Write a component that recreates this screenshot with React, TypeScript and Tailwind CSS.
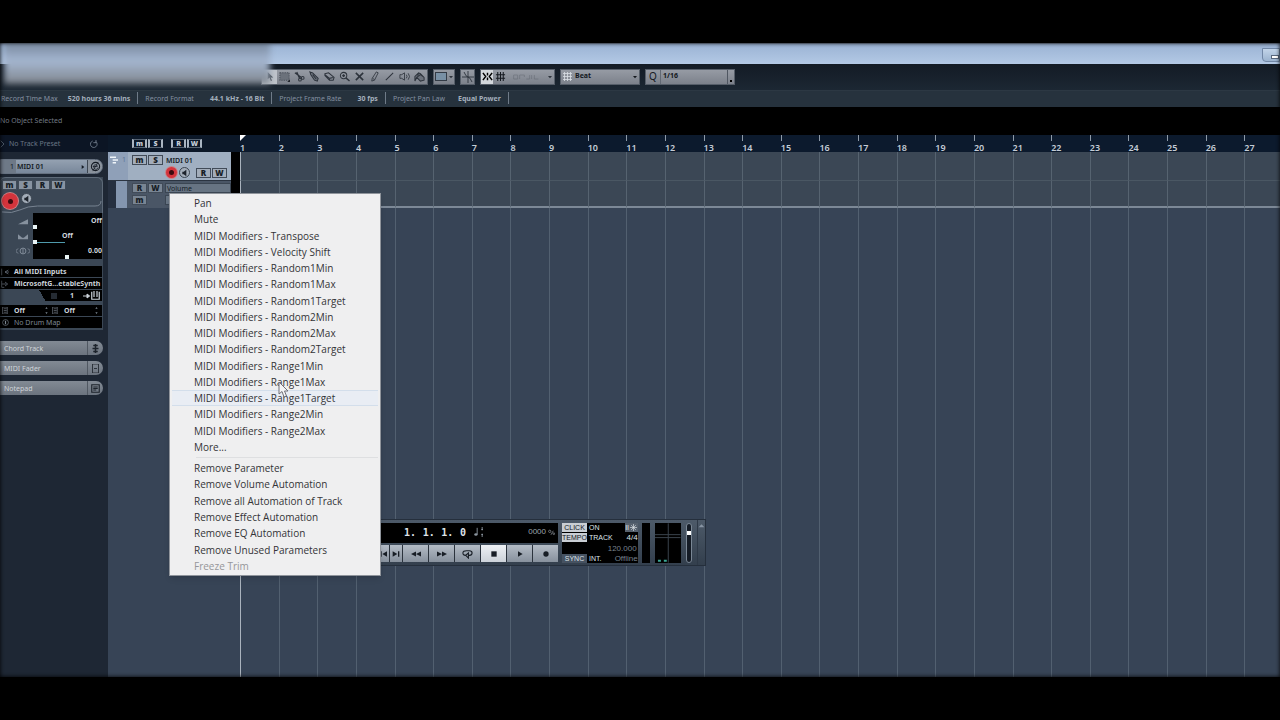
import type { ReactNode } from "react";

const bars = Array.from({ length: 27 }, (_, i) => i + 1);

const parameters = [
  "Pan",
  "Mute",
  "MIDI Modifiers - Transpose",
  "MIDI Modifiers - Velocity Shift",
  "MIDI Modifiers - Random1Min",
  "MIDI Modifiers - Random1Max",
  "MIDI Modifiers - Random1Target",
  "MIDI Modifiers - Random2Min",
  "MIDI Modifiers - Random2Max",
  "MIDI Modifiers - Random2Target",
  "MIDI Modifiers - Range1Min",
  "MIDI Modifiers - Range1Max",
  "MIDI Modifiers - Range1Target",
  "MIDI Modifiers - Range2Min",
  "MIDI Modifiers - Range2Max",
  "More...",
];

const removals = [
  "Remove Parameter",
  "Remove Volume Automation",
  "Remove all Automation of Track",
  "Remove Effect Automation",
  "Remove EQ Automation",
  "Remove Unused Parameters",
  "Freeze Trim",
];

function Icon({ children, className = "size-3" }: { children: ReactNode; className?: string }) {
  return (
    <svg viewBox="0 0 12 12" className={`shrink-0 ${className}`} fill="none" stroke="currentColor" strokeWidth="1.1" aria-hidden="true">
      {children}
    </svg>
  );
}

const tools: { name: string; icon: ReactNode }[] = [
  { name: "Object selection", icon: <path d="M4 1v8l2-2 1.5 4 1.2-.6L7.200 7H10z" fill="#39404a" stroke="none" /> },
  { name: "Range", icon: <><rect x="1" y="2" width="10" height="8" fill="#6b717b" stroke="#4a505a" strokeDasharray="1.500 1" /><path d="M12 9v3H9z" fill="#22262d" stroke="none" /></> },
  { name: "Split", icon: <><path d="M1 2l7 5M3 1l3 7" strokeWidth="1.400" /><circle cx="9.500" cy="7.500" r="1.500" /><circle cx="6.500" cy="9.500" r="1.500" /></> },
  { name: "Glue", icon: <path d="M1 1l3 1 6 6-1 3-3-1-4-6zM4 4l4 5" fill="#6b717b" /> },
  { name: "Erase", icon: <path d="M1 3l4-1 6 5-1 3H6L1 5zM1 4l5 4 4-1M6 8v2" /> },
  { name: "Zoom", icon: <><circle cx="5" cy="5" r="3.500" /><path d="M3.500 5h3M5 3.500v3M7.500 7.500l4 3.500" strokeWidth="1.500" /></> },
  { name: "Mute", icon: <path d="M2 2l8 8M10 2l-8 8" strokeWidth="1.700" /> },
  { name: "Draw", icon: <path d="M8 1l2 1-4 8-3 1 .5-3zM4 8l2 1.500" strokeWidth=".9" /> },
  { name: "Line", icon: <path d="M2 10l8-8" /> },
  { name: "Play", icon: <path d="M1 4h2l3-2v8L3 8H1zM8 4q1.500 2 0 4M10 2.500q3 3.500 0 7" strokeWidth=".9" /> },
  { name: "Colour", icon: <path d="M1 11V6l4-4 2 1 4 4v3l-4 1-4-4zM5 2l-1 3M3 7l4-3 4 3" fill="#6b717b" /> },
];

function MiniButton({ label, className = "bg-[#a3adba]", children }: { label: string; className?: string; children: ReactNode }) {
  return (
    <button aria-label={label} className={`flex h-[10px] w-[15px] items-center justify-center border border-[#414b58] font-sans text-[8px] leading-none font-black text-[#171d26] ${className}`}>
      {children}
    </button>
  );
}

function RecordButton({ className }: { className: string }) {
  return (
    <button aria-label="Record enable" className={`flex shrink-0 items-center justify-center rounded-full bg-[#d3343c] ring-1 ring-[#c98286] ${className}`}>
      <span className="size-[5px] rounded-full bg-[#3b0a0e]" />
    </button>
  );
}

function MonitorButton() {
  return (
    <button aria-label="Monitor" className="flex size-[11px] shrink-0 items-center justify-center rounded-full border border-[#3c4652] bg-[#a3adb9] text-[#1c222b]">
      <Icon className="size-2"><path d="M2 4h2l4-3v10L4 8H2z" fill="currentColor" stroke="none" /></Icon>
    </button>
  );
}

function Toolbar() {
  const group = "flex h-4 items-center border border-[#565e69] bg-linear-to-b from-[#969ba4] to-[#7c818b]";
  return (
    <div className="flex h-[26px] items-center gap-[5px] bg-linear-to-b from-[#131b25] to-[#1c2733] pb-px pl-[261px] text-[#2d333c]">
      <div className={group}>
        {tools.map((t, i) => (
          <button key={t.name} aria-label={t.name} className={`flex h-full w-[15px] items-center justify-center ${i === 0 ? "bg-[#bfc4cb]" : ""}`}>
            <Icon className="size-[11px]">{t.icon}</Icon>
          </button>
        ))}
      </div>
      <button aria-label="Colour menu" className={`${group} w-[22px] justify-center gap-[2px]`}>
        <span className="h-[9px] w-3 border border-[#333b46] bg-[#7890a5]" />
        <Icon className="size-1"><path d="M0 3h12L6 10z" fill="currentColor" stroke="none" /></Icon>
      </button>
      <button aria-label="Snap to zero crossing" className={`${group} w-[15px] justify-center`}>
        <Icon><path d="M6 0v12M0 6h12M2 1q2 5 4 5t4 5" strokeWidth=".9" /></Icon>
      </button>
      <div className={`${group} w-[75px]`}>
        <button aria-label="Snap" className="flex h-full w-[15px] items-center justify-center bg-[#d3d7dc] text-black">
          <Icon className="size-[11px]"><path d="M1 2l3 4-3 4M11 2L8 6l3 4M6 2v3M6 7v3" strokeWidth="1.600" /></Icon>
        </button>
        <button aria-label="Snap type" className="flex h-full flex-1 items-center gap-[5px] px-[2px]">
          <Icon className="size-[11px] text-[#15191f]"><path d="M3 1v10M6 1v10M9 1v10M1 4h10M1 8h10" /></Icon>
          <Icon className="h-2 w-[32px] opacity-30"><path d="M-14 3h6v6h-6zM-5 9V3h7v3M5 9h5V3M13 3v6M17 3v6h6" /></Icon>
          <Icon className="ml-auto size-1"><path d="M0 3h12L6 10z" fill="currentColor" stroke="none" /></Icon>
        </button>
      </div>
      <button className={`${group} w-20 gap-[3px] px-[2px] text-[7px] font-bold text-[#14181e]`}>
        <Icon className="size-[9px] text-[#d8dde3]"><path d="M2 0v12M6 0v12M10 0v12M0 2h12M0 6h12M0 10h12" /></Icon>
        Beat
        <Icon className="ml-auto size-1"><path d="M0 3h12L6 10z" fill="currentColor" stroke="none" /></Icon>
      </button>
      <button className={`${group} w-[90px] text-[7px] font-bold text-[#14181e]`}>
        <span className="flex h-full w-[15px] items-center justify-center border-r border-[#626974] text-[10px] font-normal">Q</span>
        <span className="flex-1 pl-[2px] text-left">1/16</span>
        <span className="flex h-full w-[7px] items-end justify-center border-l border-[#4f5661] pb-[2px]"><span className="size-[2px] bg-black" /></span>
      </button>
    </div>
  );
}

function InfoItem({ label, value, gap }: { label: string; value: string; gap: string }) {
  return (
    <div className={`flex h-3 items-center border-r border-[#6f7b88] pr-[7px] ${gap}`}>
      <span className="text-[#8490a0]">{label}</span>
      <span className="font-bold text-[#a4afbc]">{value}</span>
    </div>
  );
}

function ValueRow({ align, value, knob, fill }: { align: string; value: string; knob: string; fill?: boolean }) {
  return (
    <div className="flex h-[15px] flex-col justify-between pt-[3px]">
      <span className={`leading-[8px] ${align}`}>{value}</span>
      <span className="flex h-1 items-center">
        <span className={`size-1 bg-[#e9f4f5] ${knob}`} />
        {fill && <span className="h-px w-7 bg-[#4f9aac]" />}
      </span>
    </div>
  );
}

function Inspector() {
  const row = "flex h-[11px] items-center bg-black";
  return (
    <aside className="flex w-[108px] shrink-0 flex-col bg-[#1e2734] text-[7px] leading-none font-bold text-[#ccd3da]">
      <div className="flex h-[17px] items-center bg-[#0c1524] pr-2 font-normal">
        <Icon className="size-2 text-[#637080]"><path d="M1 1l5 5-5 5" /></Icon>
        <span className="flex-1 pl-[1px] text-[#697584]">No Track Preset</span>
        <Icon className="mr-[2px] size-2 text-[#8793a2]"><path d="M9 2.500A5 5 0 1 1 4 1.500M9 0v4H5" /></Icon>
      </div>
      <div className="mt-[7px] flex h-[15px] w-[103px] items-center overflow-hidden rounded-r-full border border-[#667180] bg-linear-to-b from-[#94a1b1] to-[#78879a] text-[#141a23]">
        <span className="flex h-full w-[15px] items-center justify-end bg-[#6e7987] pr-[2px] font-normal">1</span>
        <span className="flex-1 pl-px font-semibold">MIDI 01</span>
        <Icon className="mr-[2px] size-1"><path d="M2 0l8 6-8 6z" fill="currentColor" stroke="none" /></Icon>
        <button aria-label="Edit channel" className="flex h-full w-[15px] items-center justify-center border-l border-[#3d4651] bg-[#8a929c]">
          <Icon className="size-[11px]"><circle cx="6" cy="6" r="4.500" /><path d="M3 6h5q0-2-2-2T4 6t2 3 3-2M9 1L3 11" strokeWidth=".8" /></Icon>
        </button>
      </div>
      <section className="mt-[3px] w-[103px] bg-[#3b4755] pb-[2px]">
        <div className="relative h-9 rounded-t-md border-t border-r border-[#5e6a78] pt-[2px] pl-[2px]">
          <div className="flex gap-px">
            <MiniButton label="Mute" className="bg-[#8893a1]">m</MiniButton>
            <MiniButton label="Solo" className="bg-[#8893a1]">S</MiniButton>
            <MiniButton label="Read automation" className="ml-px bg-[#8893a1]">R</MiniButton>
            <MiniButton label="Write automation" className="bg-[#8893a1]">W</MiniButton>
          </div>
          <div className="mt-[3px] flex gap-[3px]">
            <RecordButton className="size-4" />
            <MonitorButton />
          </div>
          <svg viewBox="0 0 103 12" className="absolute inset-x-0 bottom-0 h-3 w-full" fill="none" stroke="#788492" aria-hidden="true">
            <path d="M2 11q10 2 18-2t18-4h58q6 0 6-5" />
          </svg>
        </div>
        <div className="flex">
          <div className="flex w-[33px] flex-col items-center justify-around pl-3 text-[#86919e]">
            <Icon className="size-[10px]"><path d="M0 10L12 4v6z" fill="currentColor" stroke="none" /></Icon>
            <Icon className="size-[10px]"><path d="M0 4v6h12V4L7 8H5z" fill="currentColor" stroke="none" /></Icon>
            <Icon className="h-[10px] w-[14px]"><circle cx="6" cy="6" r="3.500" /><path d="M6 3v6M0 3l-3 3 3 3M12 3l3 3-3 3" /></Icon>
          </div>
          <div className="h-[46px] w-[69px] bg-black pt-px">
            <ValueRow align="text-right" value="Off" knob="" />
            <ValueRow align="text-center" value="Off" knob="" fill />
            <ValueRow align="text-right" value="0.00" knob="ml-8" />
          </div>
        </div>
        <div className="mt-[7px] flex w-[102px] flex-col gap-px">
          <div className={`${row} gap-[5px] pl-[1px]`}><Icon className="size-2 text-[#68727e]"><path d="M1 1v10M11 3L6 6l5 3M6 6h6" /></Icon>All MIDI Inputs</div>
          <div className={`${row} gap-[5px] pl-[1px]`}><Icon className="size-2 text-[#68727e]"><path d="M1 1v10h4M1 6h7M6 3l4 3-4 3" /></Icon><span className="whitespace-nowrap">MicrosoftG...etableSynth</span></div>
          <div className="flex h-[11px] items-center bg-linear-[60deg] from-[#3b4755] from-42% to-black to-42% pr-[2px]">
            <span className="ml-[51px] size-[6px] bg-[#252b33]" />
            <span className="ml-[13px] flex-1">1</span>
            <Icon className="size-2"><path d="M0 6h8M6 3l4 3-4 3z" fill="currentColor" strokeWidth="1.500" /></Icon>
            <Icon className="size-[9px]"><path d="M1 1v10h10V1M4 0v8M8 0v8" strokeWidth="1.600" /></Icon>
          </div>
        </div>
        <div className="mt-[4px] flex w-[102px] flex-col gap-px">
          <div className={`${row} pl-[2px]`}>
            {[0, 1].map((i) => (
              <div key={i} className="flex flex-1 items-center gap-[5px]">
                <Icon className="size-[7px] text-[#77818d]"><path d="M1 0h8v12H1zM3 3h5M3 6h5M3 9h5" /></Icon>
                <span className="flex-1">Off</span>
                <Icon className="mr-[2px] size-[7px] text-[#7c8793]"><path d="M4 3l2-3 2 3zM4 9l2 3 2-3z" fill="currentColor" stroke="none" /></Icon>
              </div>
            ))}
          </div>
          <div className={`${row} gap-[5px] pl-[2px] font-normal text-[#7c8692]`}><Icon className="size-[7px]"><circle cx="6" cy="6" r="5" /><path d="M6 3v6" strokeWidth="2" /></Icon>No Drum Map</div>
        </div>
      </section>
      <div className="mt-[11px] flex flex-col gap-[6px] text-[#d0d4d9]">
        {["Chord Track", "MIDI Fader", "Notepad"].map((name, i) => (
          <button key={name} className="flex h-[14px] w-[103px] items-center overflow-hidden rounded-r-full bg-linear-to-b from-[#828a94] to-[#6c747f] text-left font-normal">
            <span className="flex-1 pl-1">{name}</span>
            <span className="flex h-full w-4 items-center border-l border-[#505862] pl-[3px] text-[#1d232b]">
              <Icon className="size-[9px]">
                {i === 0 && <path d="M6 0v12M3 2h6M2 6h8M3 10h6" strokeWidth="2" />}
                {i === 1 && <path d="M2 0h8v12H2zM4 6h4" />}
                {i === 2 && <path d="M1 1h10v10H1zM3 4h6M3 6h6M3 8h4" strokeWidth="1.500" />}
              </Icon>
            </span>
          </button>
        ))}
      </div>
    </aside>
  );
}

function TrackList() {
  return (
    <section className="flex w-[132px] shrink-0 flex-col text-[7px] leading-none">
      <div className="flex h-[17px] items-center gap-px bg-[#0c1828] pl-6">
        {["m", "S", "R", "W"].map((l, i) => (
          <button key={l} aria-label={`Global ${l}`} className={`flex h-[9px] w-[15px] items-center justify-center border-x-2 border-y border-x-[#aab5c1] border-y-[#566372] text-[7px] font-black text-[#c3ccd6] ${i === 2 ? "ml-[7px]" : ""}`}>
            {l}
          </button>
        ))}
      </div>
      <div className="flex bg-black">
        <div className="w-[123px]">
          <div className="flex h-7 bg-[#a0afc1]">
            <div className="flex w-5 justify-between bg-[#8fa0b8] px-[2px] pt-1">
              <Icon className="size-2 text-[#f0f5fa]"><path d="M0 2h9M4 6h8M4 10h5" strokeWidth="2.200" /></Icon>
              <span className="text-[7px] leading-[8px] text-[#5d7594]">1</span>
            </div>
            <div className="flex flex-1 flex-col gap-[2px] pt-[3px] pl-1">
              <div className="flex items-center gap-px">
                <MiniButton label="Mute track">m</MiniButton>
                <MiniButton label="Solo track">S</MiniButton>
                <span className="pl-[2px] font-semibold text-[#151c26]">MIDI 01</span>
              </div>
              <div className="flex items-center gap-[2px] pl-[34px]">
                <RecordButton className="size-[11px]" />
                <MonitorButton />
                <span className="ml-[4px] flex gap-px">
                  <MiniButton label="Read track">R</MiniButton>
                  <MiniButton label="Write track">W</MiniButton>
                </span>
              </div>
            </div>
          </div>
          <div className="flex h-7 border-t border-[#2b3441] bg-[#4a5666]">
            <span className="w-2 bg-[#263040]" />
            <span className="w-[11px] bg-[#8496af]" />
            <div className="flex flex-1 flex-col gap-[2px] pt-[2px] pl-[5px]">
              <div className="flex items-center gap-px">
                <MiniButton label="Read lane" className="bg-[#798593]">R</MiniButton>
                <MiniButton label="Write lane" className="bg-[#798593]">W</MiniButton>
                <button className="ml-px h-[10px] flex-1 border border-[#3b4653] bg-[#677483] pl-px text-left text-[#151c26]">Volume</button>
              </div>
              <div className="flex gap-px">
                <MiniButton label="Mute lane" className="bg-[#798593]">m</MiniButton>
                <span className="ml-[17px] h-[10px] flex-1 border border-[#3b4653] bg-[#677483]" />
              </div>
            </div>
          </div>
        </div>
      </div>
    </section>
  );
}

function Arrange() {
  return (
    <section className="flex min-w-0 flex-1">
      {bars.map((bar) => (
        <div key={bar} className={`flex min-w-0 flex-col ${bar === 27 ? "flex-[25]" : "flex-[27]"}`}>
          <div className="flex h-[17px] flex-col justify-between bg-[#0c1a2d] text-[9px] font-semibold text-[#c4ccd6]">
            {bar === 1 ? (
              <svg viewBox="0 0 6 6" className="size-[6px]" aria-hidden="true"><path d="M0 0h6L0 6z" fill="#fff" /></svg>
            ) : (
              <span className="h-[6px] w-px bg-[#8e9aa8]" />
            )}
            <span className="leading-[9px]">{bar}</span>
          </div>
          <div className={`h-7 border-l bg-[#3b4755] ${bar === 1 ? "border-[#aab3bd]" : "border-[#566370]"}`} />
          <div className={`h-7 border-t border-b-2 border-l bg-[#3b4755] ${bar === 1 ? "border-l-[#aab3bd]" : "border-l-[#566370]"} border-t-[#4a5763] border-b-[#7c8896]`} />
          <div className={`flex-1 border-l ${bar === 1 ? "border-[#aab3bd]" : "border-[#526070]"}`} />
        </div>
      ))}
    </section>
  );
}

const transport: { name: string; width: string; size: string; icon: ReactNode }[] = [
  { name: "Previous marker", width: "w-[18px] justify-end", size: "size-2", icon: <path d="M9 2v8L2 6zM0 2h1v8H0z" /> },
  { name: "Next marker", width: "w-3 justify-center", size: "size-2", icon: <path d="M1 2v8l7-4zM9 2h2v8H9z" /> },
  { name: "Rewind", width: "w-[25px] justify-center", size: "size-[10px]", icon: <path d="M6 3v6L0 6zM12 3v6L6 6z" /> },
  { name: "Forward", width: "w-[25px] justify-center", size: "size-[10px]", icon: <path d="M0 3v6l6-3zM6 3v6l6-3z" /> },
  { name: "Cycle", width: "w-[25px] justify-center", size: "size-[11px]", icon: <path d="M4 8Q1 8 1 5.500T5 3h3q3 0 3 2.500T8 8H7M7 5.500V11L4 8z" fill="none" stroke="currentColor" strokeWidth="1.200" /> },
  { name: "Stop", width: "w-[25px] justify-center", size: "size-2", icon: <path d="M2 2h8v8H2z" /> },
  { name: "Play", width: "w-[25px] justify-center", size: "size-2", icon: <path d="M3 2v8l7-4z" /> },
  { name: "Record", width: "w-[25px] justify-center", size: "size-2", icon: <circle cx="6" cy="6" r="4" /> },
];

function Transport() {
  const tag = "w-[25px] bg-[#c9ced4] text-center text-[7px] leading-[9px] text-[#15191f]";
  return (
    <section aria-label="Transport" className="absolute top-[384px] left-[370px] flex h-[47px] w-[336px] border border-[#252f3c] bg-linear-to-b from-[#4d5a69] to-[#333f4d] text-[#dfe4e9]">
      <div className="flex w-[188px] flex-col justify-between py-[3px]">
        <div className="flex h-5 items-center bg-black pr-[3px] pb-[2px] font-['DejaVu_Sans_Mono',monospace] text-[10px] font-bold">
          <span className="ml-[33px] flex w-[62px] justify-between"><span>1.</span><span>1.</span><span>1.</span><span>0</span></span>
          <Icon className="ml-1 h-[10px] w-4 text-[#8b959f]"><path d="M5 1v8M11 0v4M11 8v4M10 3h2M10 9h2" /><ellipse cx="3.500" cy="9" rx="2" ry="1.500" fill="currentColor" stroke="none" /></Icon>
          <span className="ml-auto flex items-center gap-[2px] font-['Liberation_Sans',sans-serif] text-[8px] font-normal text-[#9ca5ae]">0000 <Icon className="size-[7px]"><circle cx="3" cy="4" r="2" /><path d="M9 3L5 10" /><circle cx="10" cy="8" r="1.500" /></Icon></span>
        </div>
        <div className="flex h-[17px] gap-px bg-[#2b333d]">
          {transport.map((b) => (
            <button key={b.name} aria-label={b.name} className={`flex items-center text-[#181e26] ${b.width} ${b.name === "Stop" ? "bg-linear-to-b from-[#eef1f5] to-[#ccd2d9]" : "bg-linear-to-b from-[#b4bcc6] to-[#87919d]"}`}>
              <svg viewBox="0 0 12 12" className={b.size} fill="currentColor" aria-hidden="true">{b.icon}</svg>
            </button>
          ))}
        </div>
      </div>
      <div className="mt-[3px] ml-1 flex h-10 w-[77px] flex-col justify-between bg-black font-['Liberation_Sans',sans-serif] text-[7px] leading-[9px]">
        <div className="flex"><span className={tag}>CLICK</span><span className="ml-[2px] flex-1">ON</span><span className="flex w-[13px] items-center justify-center gap-px bg-[#56616e]"><span>II</span><Icon className="size-[7px]"><path d="M6 0v12M0 6h12M2 2l8 8M10 2l-8 8" /></Icon></span></div>
        <div className="flex"><span className={tag}>TEMPO</span><span className="ml-[2px] flex-1">TRACK</span><span className="text-[8px]">4/4</span></div>
        <div className="pr-px text-right text-[8px] text-[#77828e]">120.000</div>
        <div className="flex"><span className="w-[25px] bg-[#465261] text-center">SYNC</span><span className="ml-[2px] flex-1">INT.</span><span className="text-[8px] text-[#77828e]">Offline</span></div>
      </div>
      <div className="mt-[3px] ml-1 h-10 w-[9px] bg-black" />
      <div className="mt-[3px] ml-[5px] flex h-10 w-[26px] items-end bg-black">
        <svg viewBox="0 0 26 40" className="h-full w-full" aria-hidden="true">
          <path d="M0 11.500h26M0 14.500h26M13.500 0v40" stroke="#3b444e" />
          <path d="M3 38h3M9 38h3" stroke="#3ba795" strokeWidth="2" />
        </svg>
      </div>
      <div className="mt-[3px] ml-[5px] flex h-10 w-[6px] flex-col items-center rounded-full border border-[#7a8795] bg-[#141b25] pt-[7px]"><span className="size-1 bg-white" /></div>
      <div className="ml-[5px] flex flex-1 justify-center border-l border-[#2e3947] pt-[2px]"><Icon className="size-[7px] text-[#8794a3]"><path d="M1 9l5-5 5 5z" fill="currentColor" stroke="none" /></Icon></div>
    </section>
  );
}

function ContextMenu() {
  const item = "flex min-h-0 w-full items-center border-y pl-[22px] text-left";
  return (
    <div role="menu" className="absolute top-[58px] left-[169px] w-[212px] border border-[#8f949b] bg-[#efeff0] px-[2px] py-px font-['Open_Sans',sans-serif] text-[10px] leading-none text-[#343437] shadow-md">
      <div className="grid h-[260px] grid-rows-16">
        {parameters.map((p) => (
          <button key={p} role="menuitem" className={`${item} ${p.endsWith("Range1Target") ? "border-[#d3deeb] bg-[#e9edf4]" : "border-transparent"}`}>{p}</button>
        ))}
      </div>
      <div className="mt-[2px] mb-[2px] ml-6 border-t border-[#dedfe1]" />
      <div className="grid h-[114px] grid-rows-7">
        {removals.map((p) => (
          <button key={p} role="menuitem" disabled={p === "Freeze Trim"} className={`${item} border-transparent disabled:text-[#96969a]`}>{p}</button>
        ))}
      </div>
      <svg viewBox="0 0 11 17" className="absolute top-[187px] left-[108px] h-[17px] w-[11px]" aria-hidden="true">
        <path d="M1 1v12l3-2.500L6 16l2.500-1L6.500 10H10z" fill="#f4f4f6" stroke="#707078" />
      </svg>
    </div>
  );
}

export default function App() {
  return (
    <div className="flex min-h-screen flex-col bg-black py-[43px] font-['Noto_Sans',sans-serif]">
      <div className="relative flex flex-1 flex-col overflow-hidden">
        <header className="flex h-[21px] items-end justify-end border-t border-[#8292aa] bg-linear-to-b from-[#9bb3d4] to-[#b3c9e5] pb-[2px]">
          <button aria-label="Minimize" className="flex h-[14px] w-[18px] items-center justify-end rounded-bl-sm border border-[#7187a6] bg-linear-to-b from-[#c2d4e9] to-[#9bb3cf]">
            <span className="mt-1 h-1 w-2 border border-[#59687d] bg-white" />
          </button>
        </header>
        <Toolbar />
        <div className="flex h-[17px] items-center gap-[7px] border-t border-[#2c3843] bg-[#26323d] pb-[2px] pl-px text-[7px] leading-none whitespace-nowrap">
          <InfoItem label="Record Time Max" value="520 hours 36 mins" gap="gap-[10px]" />
          <InfoItem label="Record Format" value="44.1 kHz - 16 Bit" gap="gap-4" />
          <InfoItem label="Project Frame Rate" value="30 fps" gap="gap-4" />
          <InfoItem label="Project Pan Law" value="Equal Power" gap="gap-[13px]" />
        </div>
        <div className="flex h-7 items-center bg-black text-[7px] text-[#727a84]">No Object Selected</div>
        <main className="relative flex flex-1 bg-[#374456]">
          <Inspector />
          <TrackList />
          <Arrange />
          <Transport />
          <ContextMenu />
        </main>
        <div className="absolute -top-px left-1 h-[42px] w-[266px] bg-linear-to-b from-[#76869c] via-[#a5b7d1] via-45% to-[#80868e] blur-[3px]" />
        <div className="pointer-events-none absolute inset-0 shadow-[inset_0_0_4px_#000000]" />
      </div>
    </div>
  );
}
